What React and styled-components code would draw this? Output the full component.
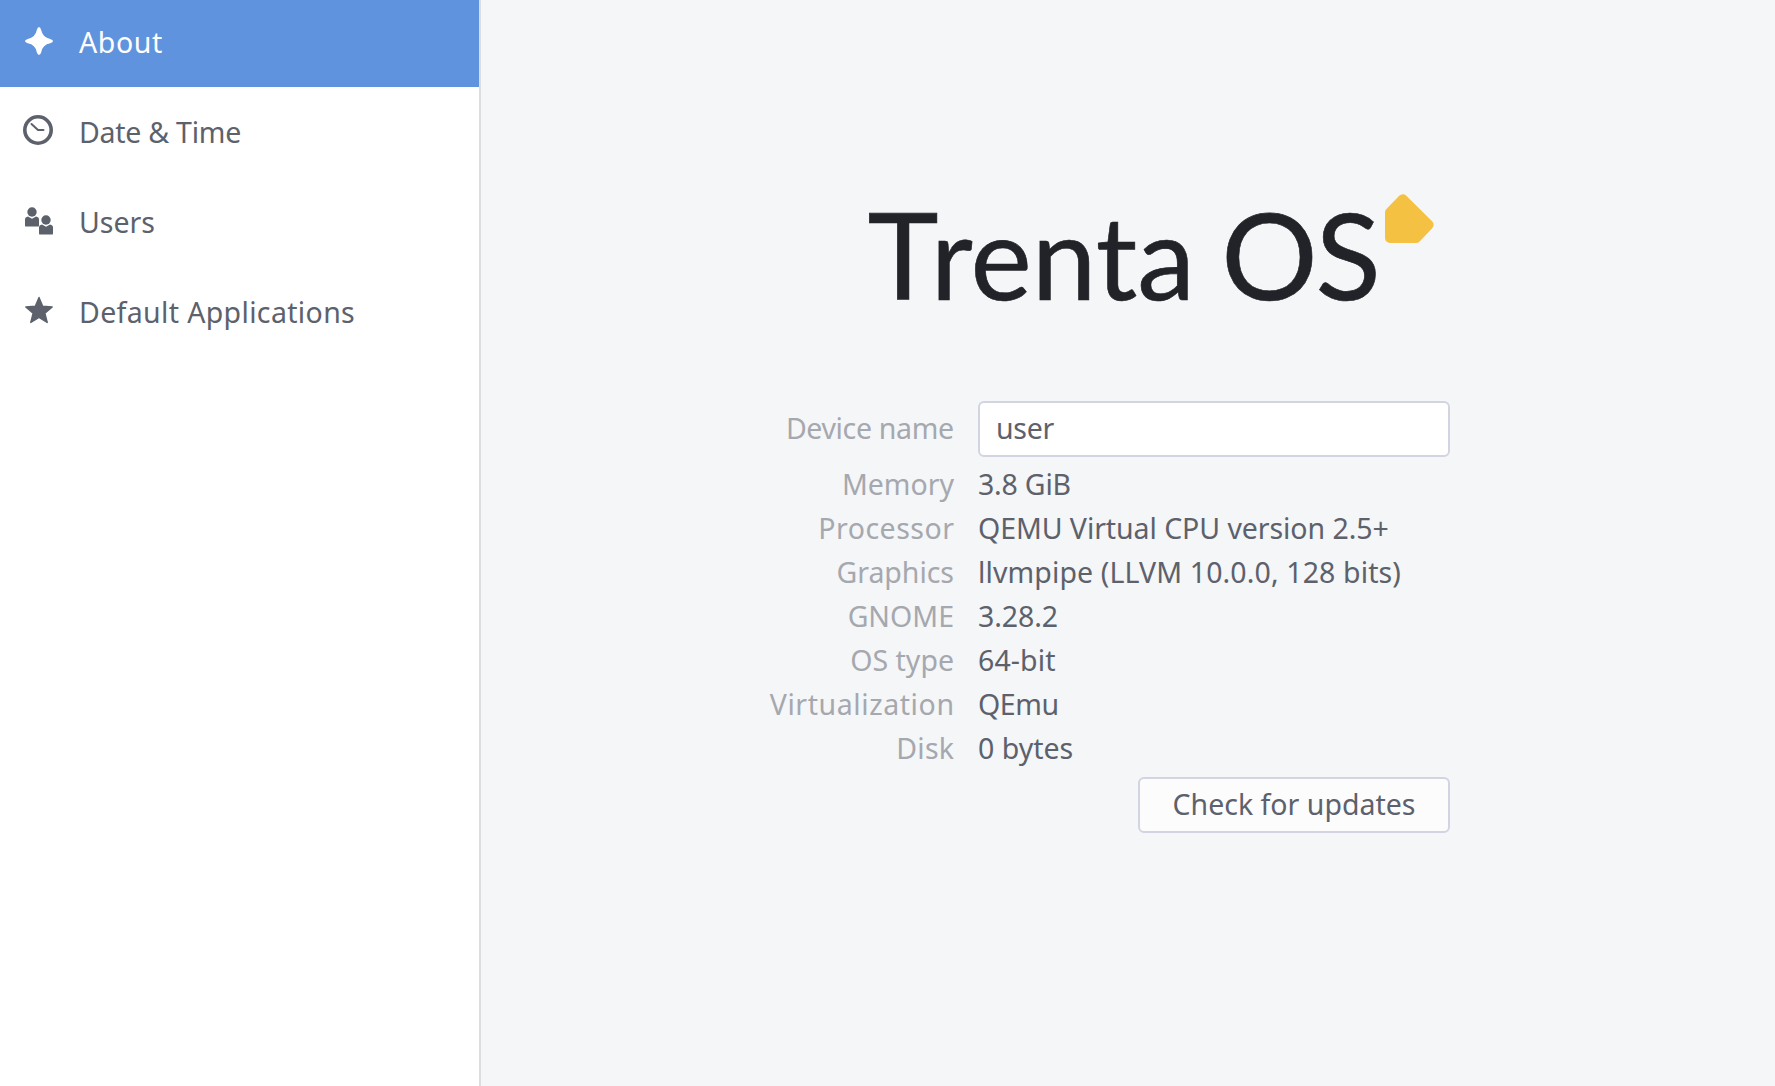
import React from "react";
import styled, { createGlobalStyle } from "styled-components";

const GlobalStyle = createGlobalStyle`
  * { box-sizing: border-box; }
  body { margin: 0; background: #f5f6f7; }
`;

const Window = styled.div`
  display: flex;
  height: 1086px;
  overflow: hidden;
  background: #f5f6f7;
  color: #5c616c;
  font-family: "Noto Sans", "Open Sans", sans-serif;
  font-size: 28.5px;
  line-height: 44px;
`;

const Sidebar = styled.nav`
  display: flex;
  flex-direction: column;
  gap: 3px;
  flex: 0 0 481px;
  background: #fff;
  border-right: 2px solid #dcdddf;
`;

const NavItem = styled.div`
  display: flex;
  align-items: center;
  gap: 24px;
  height: 87px;
  padding: 0 0 3px 23px;
  white-space: nowrap;
  background: ${(p) => (p.$active ? "#6093dd" : "transparent")};
  color: ${(p) => (p.$active ? "#fff" : "#5c616c")};
`;

const IconBox = styled.svg`
  flex: none;
  width: 32px;
  height: 32px;
  overflow: visible;
  fill: currentColor;
`;

const Text = styled.span`
  letter-spacing: ${(p) => p.$track || 0}px;
  margin-right: ${(p) => -(p.$track || 0)}px;
`;

const Content = styled.main`
  flex: 1;
  padding: 180px 0 0 269px;
`;

const Logo = styled.div`
  display: flex;
  align-items: flex-start;
  height: 140px;
  margin: 0 0 81px 117.5px;
`;

const Wordmark = styled.div`
  width: 516.5px;
  height: 140px;
  line-height: 148px;
  white-space: pre;
  color: #222328;
  font-family: Lato, sans-serif;
  font-size: 120.5px;
  -webkit-text-stroke: 0.6px #222328;
`;

const Glyphs = styled.span`
  font-size: ${(p) => p.$size || 120.5}px;
  letter-spacing: ${(p) => p.$track}px;
`;

const Mark = styled.svg`
  width: 52px;
  height: 52px;
  margin-top: 13px;
`;

const Details = styled.div`
  display: grid;
  grid-template-columns: 204px 472px;
  column-gap: 24px;
  white-space: nowrap;
`;

const Label = styled.div`
  display: flex;
  align-items: center;
  justify-content: flex-end;
  color: #a5a8ae;
  height: ${(p) => (p.$tall ? 56 : 44)}px;
  margin-bottom: ${(p) => (p.$tall ? 5 : 0)}px;
  padding-bottom: ${(p) => (p.$tall ? 2 : 0)}px;
`;

const Value = styled.div`
  height: 44px;
`;

const Field = styled.div`
  display: flex;
  align-items: center;
  height: 56px;
  padding: 0 16px 2px;
  background: #fff;
  border: 2px solid #d3d4e2;
  border-radius: 6px;
`;

const Button = styled.button`
  grid-column: 2;
  justify-self: end;
  width: 312px;
  height: 56px;
  margin-top: 7px;
  padding: 0 0 2px;
  font: inherit;
  color: inherit;
  background: #fcfcfd;
  border: 2px solid #d3d4e2;
  border-radius: 6px;
`;

const icons = {
  about: (
    <path
      transform="translate(0 0.6)"
      d="M16 0.5Q17.3 0.5 18.2 3.4Q19.6 10.9 27.2 12.3Q30 13.2 30 14.5Q30 15.8 27.2 16.7Q19.6 18.1 18.2 25.6Q17.3 28.5 16 28.5Q14.7 28.5 13.8 25.6Q12.4 18.1 4.8 16.7Q2 15.8 2 14.5Q2 13.2 4.8 12.3Q12.4 10.9 13.8 3.4Q14.7 0.5 16 0.5Z"
    />
  ),
  clock: (
    <g fill="none" stroke="currentColor">
      <circle cx="15" cy="14" r="13.2" strokeWidth="3.6" />
      <path d="M8.5 8L15 14H20.5" strokeWidth="2" strokeLinecap="round" strokeLinejoin="round" />
    </g>
  ),
  users: (
    <g transform="translate(0 0.6)">
      <circle cx="9" cy="5.4" r="4.7" />
      <path d="M5 9.8L9 12.2L13 9.8Q16 10.3 16 13V18.8Q16 20 14.8 20H3.2Q2 20 2 18.8V13Q2 10.3 5 9.8Z" />
      <circle cx="23" cy="13.4" r="4.7" />
      <path d="M19 17.8L23 20.2L27 17.8Q30 18.3 30 21V26.8Q30 28 28.8 28H17.2Q16 28 16 26.8V21Q16 18.3 19 17.8Z" />
    </g>
  ),
  star: (
    <path
      d="M16 1.5L19.7 10.3L29.2 11L21.9 17.2L24.2 26.5L16 21.5L7.8 26.5L10.1 17.2L2.8 11L12.3 10.3Z"
      stroke="currentColor"
      strokeWidth="1.4"
      strokeLinejoin="round"
    />
  ),
};

const nav = [
  { icon: "about", text: "About", track: 0.6, active: true },
  { icon: "clock", text: "Date & Time", track: -0.25 },
  { icon: "users", text: "Users", track: 0 },
  { icon: "star", text: "Default Applications", track: 0.35 },
];

const rows = [
  ["Memory", 0, "3.8 GiB", -0.2],
  ["Processor", 0.5, "QEMU Virtual CPU version 2.5+", -0.07],
  ["Graphics", -0.05, "llvmpipe (LLVM 10.0.0, 128 bits)", 0.12],
  ["GNOME", 0, "3.28.2", -0.1],
  ["OS type", 0, "64-bit", 0.1],
  ["Virtualization", 0.58, "QEmu", -0.4],
  ["Disk", 0.25, "0 bytes", 0],
];

export default function App() {
  return (
    <Window>
      <GlobalStyle />
      <Sidebar>
        {nav.map((n) => (
          <NavItem key={n.text} $active={n.active}>
            <IconBox viewBox="0 0 32 32">{icons[n.icon]}</IconBox>
            <Text $track={n.track}>{n.text}</Text>
          </NavItem>
        ))}
      </Sidebar>
      <Content>
        <Logo>
          <Wordmark>
            <Glyphs $track={-8}>T</Glyphs>
            <Glyphs $track={0} $size={116}>renta</Glyphs>
            <Glyphs $track={-4.5}> </Glyphs>
            <Glyphs $track={-2.3}>OS</Glyphs>
          </Wordmark>
          <Mark viewBox="534 13 52 52">
            <path
              d="M552.8 19.3L578.6 44.8L566 58H540V32.5Z"
              fill="#f4c143"
              stroke="#f4c143"
              strokeWidth="10"
              strokeLinejoin="round"
            />
          </Mark>
        </Logo>
        <Details>
          <Label $tall><Text $track={-0.35}>Device name</Text></Label>
          <Field><Text $track={-0.3}>user</Text></Field>
          {rows.map(([label, lt, value, vt]) => (
            <React.Fragment key={label}>
              <Label><Text $track={lt}>{label}</Text></Label>
              <Value><Text $track={vt}>{value}</Text></Value>
            </React.Fragment>
          ))}
          <Button><Text $track={0}>Check for updates</Text></Button>
        </Details>
      </Content>
    </Window>
  );
}
